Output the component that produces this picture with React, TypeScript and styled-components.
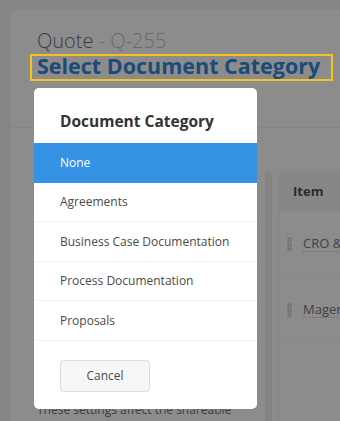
import React from 'react';
import styled, { createGlobalStyle } from 'styled-components';

const GlobalStyle = createGlobalStyle`
	html, body {
		margin: 0;
		padding: 0;
		background: #868686;
		overflow: hidden;
		font-family: 'Open Sans', 'Liberation Sans', sans-serif;
	}
`;

const Screen = styled.div`
	position: relative;
	width: 340px;
	height: 421px;
	overflow: hidden;
`;

const PageCard = styled.div`
	margin: 9px 0 0 11px;
	height: 430px;
	background: #8c8c8c;
	border-radius: 6px 0 0 0;
	padding: 21px 0 0 26px;
	box-sizing: border-box;
`;

const QuoteTitle = styled.div`
	font-size: 20px;
	line-height: 22px;
	margin-bottom: 2px;
	font-weight: 300;
	color: #3b3b3b;
	white-space: nowrap;
`;

const QuoteNumber = styled.span`
	color: #6a6a6a;
`;

const Highlight = styled.div`
	display: inline-block;
	margin-left: -7px;
	padding: 0 5px 3px;
	border: 2px solid #f4c21a;
	font-size: 21.5px;
	line-height: 20px;
	font-weight: 700;
	color: #1e4a78;
	white-space: nowrap;
	width: 289px;
`;

const TabLine = styled.div`
	margin: 46px 0 0 -26px;
	border-top: 1px solid #858585;
`;

const Content = styled.div`
	display: flex;
	gap: 6px;
	margin-top: 43px;
`;

const LeftColumn = styled.div`
	width: 228px;
	flex-shrink: 0;
	height: 260px;
	border-right: 7px solid #848484;
	border-radius: 0 5px 0 0;
	position: relative;
`;

const Note = styled.div`
	position: absolute;
	left: 0;
	top: 230px;
	font-size: 12px;
	color: #3c3c3c;
	white-space: nowrap;
`;

const TableCard = styled.div`
	flex: 1;
	border: 1px solid #878787;
	border-right: none;
	border-radius: 5px 0 0 0;
	overflow: hidden;
`;

const TableHeader = styled.div`
	height: 38px;
	background: #878787;
	display: flex;
	align-items: center;
	padding-left: 14px;
	font-size: 13px;
	font-weight: 700;
	color: #2c2c2c;
	border-bottom: 1px solid #858585;
`;

const TableRow = styled.div`
	height: 65px;
	display: flex;
	align-items: center;
	padding-left: 8px;
	gap: 11px;
	border-bottom: 1px solid #888888;
`;

const Grip = styled.span`
	width: 5px;
	height: 14px;
	background-image: radial-gradient(circle, #6e6e6e 0.9px, transparent 1px);
	background-size: 2.5px 2.5px;
	flex-shrink: 0;
`;

const ItemName = styled.span`
	font-size: 13px;
	color: #404040;
	white-space: nowrap;
	border-bottom: 1px dotted #6c6c6c;
	line-height: 16px;
`;

const Modal = styled.div`
	position: absolute;
	left: 34px;
	top: 88px;
	width: 223px;
	height: 321px;
	background: #ffffff;
	border-radius: 5px;
	overflow: hidden;
	display: flex;
	flex-direction: column;
`;

const ModalTitle = styled.div`
	padding: 21px 26px 10px;
	font-size: 15.5px;
	line-height: 24px;
	font-weight: 700;
	color: #333333;
`;

const OptionList = styled.div`
	display: flex;
	flex-direction: column;
`;

const Option = styled.div<{ $selected?: boolean }>`
	height: 38.5px;
	display: flex;
	align-items: center;
	padding-left: 26px;
	font-size: 12px;
	color: ${(p) => (p.$selected ? '#ffffff' : '#4a4a4a')};
	background: ${(p) => (p.$selected ? '#3592e5' : '#ffffff')};
	border-bottom: 1px solid ${(p) => (p.$selected ? '#3592e5' : '#f2f2f2')};
`;

const Footer = styled.div`
	padding: 19px 26px;
`;

const CancelButton = styled.button`
	width: 90px;
	height: 32px;
	background: #f6f7f8;
	border: 1px solid #dcdcdc;
	border-radius: 4px;
	font-family: inherit;
	font-size: 12px;
	color: #4a4a4a;
`;

const categories = [
	'None',
	'Agreements',
	'Business Case Documentation',
	'Process Documentation',
	'Proposals',
];

export default function App() {
	return (
		<Screen>
			<GlobalStyle />
			<PageCard>
				<QuoteTitle>
					Quote <QuoteNumber>- Q-255</QuoteNumber>
				</QuoteTitle>
				<Highlight>Select Document Category</Highlight>
				<TabLine />
				<Content>
					<LeftColumn>
						<Note>These settings affect the shareable</Note>
					</LeftColumn>
					<TableCard>
						<TableHeader>Item</TableHeader>
						<TableRow>
							<Grip />
							<ItemName>CRO &amp; Analytics</ItemName>
						</TableRow>
						<TableRow>
							<Grip />
							<ItemName>Magento Setup</ItemName>
						</TableRow>
					</TableCard>
				</Content>
			</PageCard>
			<Modal>
				<ModalTitle>Document Category</ModalTitle>
				<OptionList>
					{categories.map((c, i) => (
						<Option key={c} $selected={i === 0}>
							{c}
						</Option>
					))}
				</OptionList>
				<Footer>
					<CancelButton>Cancel</CancelButton>
				</Footer>
			</Modal>
		</Screen>
	);
}
